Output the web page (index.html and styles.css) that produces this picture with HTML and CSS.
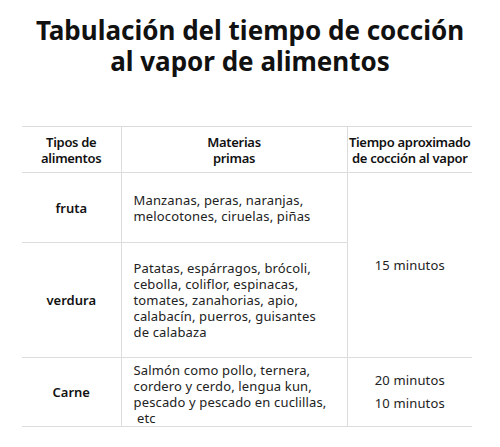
FILE: index.html
```html
<!DOCTYPE html>
<html lang="es">
<head>
<meta charset="utf-8">
<link rel="stylesheet" href="styles.css">
</head>
<body>
<h1 class="title">Tabulación del tiempo de cocción<br>al vapor de alimentos</h1>
<table class="tab">
  <colgroup><col class="c1"><col class="c2"><col class="c3"></colgroup>
  <thead>
    <tr class="r-head">
      <th>Tipos de<br>alimentos</th>
      <th>Materias<br>primas</th>
      <th>Tiempo aproximado<br>de cocción al vapor</th>
    </tr>
  </thead>
  <tbody>
    <tr class="r-fruta">
      <td class="kind">fruta</td>
      <td class="mat">Manzanas, peras, naranjas,<br>melocotones, ciruelas, piñas</td>
      <td class="time" rowspan="2">15 minutos</td>
    </tr>
    <tr class="r-verdura">
      <td class="kind">verdura</td>
      <td class="mat">Patatas, espárragos, brócoli,<br>cebolla, coliflor, espinacas,<br>tomates, zanahorias, apio,<br>calabacín, puerros, guisantes<br>de calabaza</td>
    </tr>
    <tr class="r-carne">
      <td class="kind">Carne</td>
      <td class="mat top">Salmón como pollo, ternera,<br>cordero y cerdo, lengua kun,<br>pescado y pescado en cuclillas,<br>&nbsp;etc</td>
      <td class="time two">20 minutos<br>10 minutos</td>
    </tr>
  </tbody>
</table>
</body>
</html>
```
FILE: styles.css
```css
html, body {
  margin: 0;
  padding: 0;
  background: #fff;
}
body {
  font-family: "Noto Sans", "Open Sans", sans-serif;
  color: #1a1a1a;
  width: 500px;
  height: 447px;
  overflow: hidden;
}
.title {
  margin: 0;
  padding-top: 15px;
  font-size: 26px;
  line-height: 31px;
  font-weight: 700;
  text-align: center;
  color: #111;
}
.tab {
  margin: 49px 0 0 22px;
  width: 450px;
  border-collapse: collapse;
  table-layout: fixed;
  font-size: 13px;
  line-height: 16px;
}
.c1 { width: 99px; }
.c2 { width: 226px; }
.c3 { width: 125px; }
.tab th, .tab td {
  border-top: 1px solid #dcdcdc;
  border-bottom: 1px solid #dcdcdc;
  border-left: 1px solid #dcdcdc;
  padding: 0;
  vertical-align: middle;
}
.tab th:first-child, .tab td:first-child { border-left: none; }
.tab th {
  font-weight: 600;
  text-align: center;
  color: #111;
  white-space: nowrap;
  letter-spacing: -0.3px;
}
.r-head { height: 46px; }
.r-fruta { height: 70px; }
.r-verdura { height: 115px; }
.r-carne { height: 69px; }
.kind {
  font-weight: 600;
  text-align: center;
  color: #111;
}
.mat {
  padding-left: 12px !important;
  text-align: left;
  color: #222;
  letter-spacing: 0.15px;
}
.mat.top {
  vertical-align: top;
  padding-top: 4px !important;
}
.time {
  text-align: center;
  color: #222;
  letter-spacing: 0.15px;
}
.time.two {
  line-height: 23px;
}
```
